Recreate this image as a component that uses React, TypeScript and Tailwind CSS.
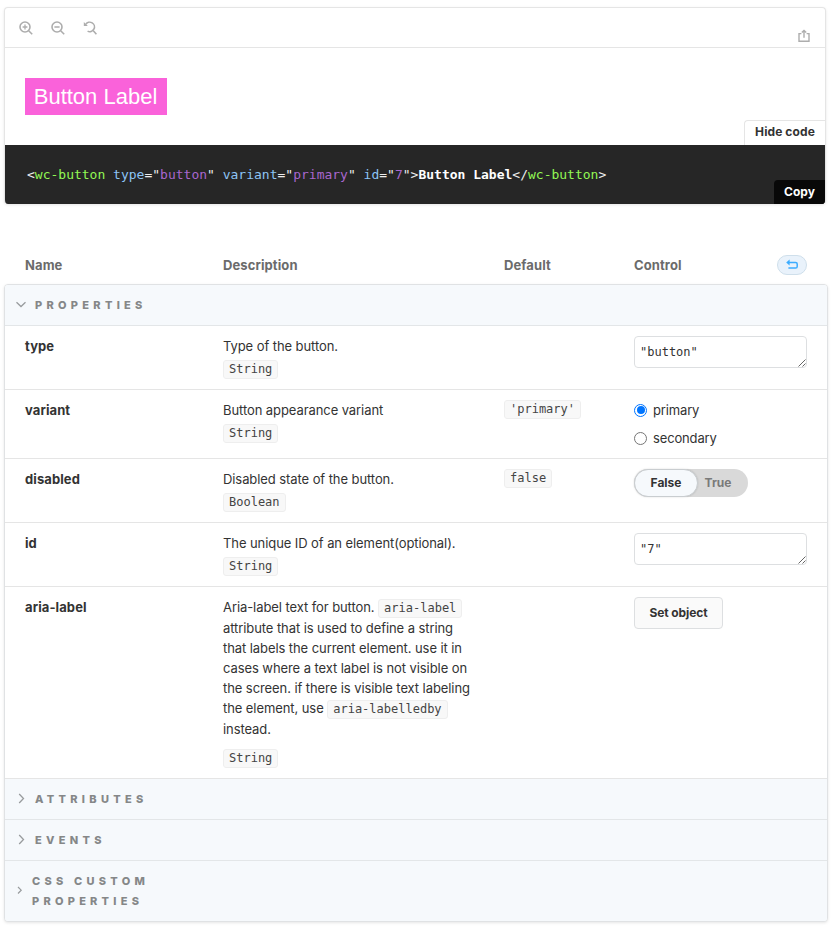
import type { ReactNode } from "react";

const SANS = "font-['Inter','Liberation_Sans',sans-serif]";
const MONO = "font-['DejaVu_Sans_Mono','Liberation_Mono',monospace]";
const COLS = "grid grid-cols-[198px_281px_130px_1fr]";

function Tag({ children }: { children: ReactNode }) {
  return (
    <code
      className={`${MONO} inline-block h-[19px] whitespace-nowrap rounded-[3px] border border-[#eeeeee] bg-[#f8f8f8] px-[5px] text-[12px] leading-[17px] tracking-normal text-[#444444]`}
    >
      {children}
    </code>
  );
}

function ToolIcon({ children }: { children: ReactNode }) {
  return (
    <svg width="14" height="14" viewBox="0 0 14 14" fill="none" stroke="#adadad" strokeWidth="1.6">
      {children}
    </svg>
  );
}

function Preview() {
  return (
    <div className="flex h-[197px] w-[822px] flex-col overflow-hidden rounded-[4px] border border-b-0 border-[#e5e5e5] bg-white shadow-[0_1px_3px_rgba(0,0,0,0.1)]">
      <div className="flex h-[40px] shrink-0 justify-between border-b border-[#e5e5e5] px-[14px]">
        <div className="flex gap-[18px] pt-[13px]">
          <ToolIcon>
            <circle cx="6" cy="6" r="5" />
            <path d="M9.7 9.7 13.2 13.2" />
            <path d="M6 3.6v4.8M3.6 6h4.8" strokeWidth="1.3" />
          </ToolIcon>
          <ToolIcon>
            <circle cx="6" cy="6" r="5" />
            <path d="M9.7 9.7 13.2 13.2" />
            <path d="M3.4 6h5.2" strokeWidth="1.3" />
          </ToolIcon>
          <ToolIcon>
            <path d="M2.8 3.4A4.7 4.7 0 1 1 4.6 10.1" />
            <path d="M10.1 9.5 13.4 13.2" />
            <path d="M.8 1v4h4z" fill="#adadad" stroke="none" />
          </ToolIcon>
        </div>
        <div className="pt-[21px]">
          <ToolIcon>
            <path d="M4.4 4.6H2v7.7h10V4.6H9.6M7 8.8V1.6M4.8 3.6 7 1.4l2.2 2.2" strokeWidth="1.4" />
          </ToolIcon>
        </div>
      </div>
      <div className="flex h-[97px] shrink-0 items-start justify-between pl-[20px]">
        <button className="mt-[30px] h-[37px] w-[142px] bg-[#fa62da] pr-px font-['Liberation_Sans',sans-serif] text-[22px] leading-[37px] text-white">
          Button Label
        </button>
        <button className="h-[25px] w-[81px] self-end rounded-tl-[4px] border-t border-l border-[#e5e5e5] bg-white pb-[2px] text-[12px] leading-[22px] font-bold tracking-[0.1px] text-[#333333]">
          Hide code
        </button>
      </div>
      <div className="flex h-[59px] shrink-0 items-end justify-between bg-[#262626] pl-[22px]">
        <pre className={`${MONO} mb-[19px] text-[13px] leading-[20px] text-[#eeeeee]`}>
          {"<"}
          <span className="text-[#92f854]">wc-button</span> <span className="text-[#8dc4f5]">type</span>="
          <span className="text-[#a967cf]">button</span>" <span className="text-[#8dc4f5]">variant</span>="
          <span className="text-[#a967cf]">primary</span>" <span className="text-[#8dc4f5]">id</span>="
          <span className="text-[#a967cf]">7</span>"{">"}
          <span className="font-bold text-white">Button Label</span>
          {"</"}
          <span className="text-[#92f854]">wc-button</span>
          {">"}
        </pre>
        <button className="h-[24px] w-[51px] rounded-tl-[4px] bg-[#080808] text-[12px] leading-[24px] font-bold text-white">
          Copy
        </button>
      </div>
    </div>
  );
}

function Section({ title, open }: { title: string; open?: boolean }) {
  return (
    <div className="flex h-[41px] items-center border-b border-[#e3e6e8] bg-[#f6f9fc] pl-[10px]">
      <svg width="12" height="12" viewBox="0 0 12 12" fill="none" stroke="#999c9e" strokeWidth="1.3">
        <path d={open ? "M1.5 3.2 6 7.5l4.5-4.3" : "M4.2 1 8.5 5.5l-4.3 4.5"} />
      </svg>
      <span className="ml-[8px] text-[11px] leading-[20px] font-extrabold tracking-[4.3px] text-[#858788] uppercase">
        {title}
      </span>
    </div>
  );
}

interface RowProps {
  name: string;
  type: string;
  height: string;
  value?: string;
  gap?: string;
  description: ReactNode;
  control: ReactNode;
}

function Row({ name, type, height, value, gap = "mt-[4px]", description, control }: RowProps) {
  return (
    <div className={`${COLS} ${height} border-b border-[#e5e5e5] pt-[10px] pl-[20px] text-[13px] leading-[20px] text-[#333333]`}>
      <div className="font-bold tracking-[0.1px]">{name}</div>
      <div className="flex flex-col items-start">
        <div className="w-[258px] tracking-[-0.08px]">{description}</div>
        <div className={`${gap} flex`}>
          <Tag>{type}</Tag>
        </div>
      </div>
      <div className="flex items-start">{value && <Tag>{value}</Tag>}</div>
      <div>{control}</div>
    </div>
  );
}

function Field({ text }: { text: string }) {
  return (
    <div className="flex h-[32px] w-[173px] items-end justify-between rounded-[4px] border border-[#dddfe1] bg-white pl-[5px]">
      <span className={`${MONO} mb-[5px] text-[12px] leading-[20px]`}>{text}</span>
      <svg width="9" height="9" viewBox="0 0 9 9" stroke="#555" strokeWidth="0.9">
        <path d="M1.5 8.5 8.5 1.5M5.5 8.5l3-3" />
      </svg>
    </div>
  );
}

function Radio({ label, checked }: { label: string; checked?: boolean }) {
  return (
    <div className="flex h-[20px] items-center">
      <span
        className={`flex size-[13px] items-center justify-center rounded-full border ${checked ? "border-[#0075ff]" : "border-[#767676]"}`}
      >
        {checked && <span className="size-[8px] rounded-full bg-[#0075ff]" />}
      </span>
      <span className="ml-[6px] tracking-[-0.15px]">{label}</span>
    </div>
  );
}

export default function App() {
  return (
    <div className={`${SANS} h-[926px] w-[834px] overflow-hidden bg-white pt-[7px] pl-[4px]`}>
      <Preview />
      <div className={`${COLS} mt-[51px] items-center pl-[21px] text-[13px] leading-[20px] font-bold tracking-[0.1px] text-[#6b6b6b]`}>
        <span>Name</span>
        <span>Description</span>
        <span>Default</span>
        <div className="flex items-center justify-between pr-[27px]">
          <span>Control</span>
          <span className="flex h-[20px] w-[30px] items-center justify-center rounded-full border border-[#cfdfeb] bg-[#e9f2fb]">
            <svg width="12" height="12" viewBox="0 0 12 12" fill="none" stroke="#3cacff" strokeWidth="1.5">
              <path d="M2 3.5h7.6a1.6 1.6 0 0 1 1.6 1.6v2.3A1.6 1.6 0 0 1 9.6 9H2.4" />
              <path d="M.2 3.5 3.6.6v5.8z" fill="#3cacff" stroke="none" />
            </svg>
          </span>
        </div>
      </div>
      <div className="mt-[9px] w-[824px] overflow-hidden rounded-[4px] border border-[#e0e2e4] bg-white shadow-[0_1px_3px_rgba(0,0,0,0.1)]">
        <Section title="Properties" open />
        <Row name="type" type="String" height="h-[64px]" description="Type of the button." control={<Field text={'"button"'} />} />
        <Row
          name="variant"
          type="String"
          height="h-[69px]"
          value="'primary'"
          description="Button appearance variant"
          control={
            <div className="flex flex-col gap-[8px]">
              <Radio label="primary" checked />
              <Radio label="secondary" />
            </div>
          }
        />
        <Row
          name="disabled"
          type="Boolean"
          height="h-[64px]"
          value="false"
          description="Disabled state of the button."
          control={
            <div className="flex h-[28px] w-[114px] rounded-full bg-[#d9d9d9] text-[12px] leading-[26px] font-bold">
              <span className="w-[64px] rounded-full border border-[#c9cdd0] bg-[#f6f9fc] text-center shadow-[0_0_2px_rgba(0,0,0,0.15)]">
                False
              </span>
              <span className="w-[40px] pt-px text-center text-[#7a7a7a]">True</span>
            </div>
          }
        />
        <Row
          name="id"
          type="String"
          height="h-[64px]"
          description="The unique ID of an element(optional)."
          control={<Field text={'"7"'} />}
        />
        <Row
          name="aria-label"
          type="String"
          height="h-[192px]"
          gap="mt-[10px]"
          description={
            <>
              Aria-label text for button. <Tag>aria-label</Tag>
              <br />
              attribute that is used to define a string
              <br />
              that labels the current element. use it in
              <br />
              cases where a text label is not visible on
              <br />
              the screen. if there is visible text labeling
              <br />
              the element, use <Tag>aria-labelledby</Tag>
              <br />
              instead.
            </>
          }
          control={
            <button className="h-[32px] w-[89px] rounded-[4px] border border-[#dddfe1] bg-[#fafafa] text-[12px] leading-[30px] font-bold tracking-[-0.1px]">
              Set object
            </button>
          }
        />
        <Section title="Attributes" />
        <Section title="Events" />
        <div className="flex h-[60px] items-center bg-[#f6f9fc] pl-[11px]">
          <svg width="8" height="12" viewBox="0 0 8 12" fill="none" stroke="#999c9e" strokeWidth="1.2">
            <path d="M2 2 5.2 5.2 2 8.5" />
          </svg>
          <span className="ml-[8px] text-[11px] leading-[20px] font-extrabold tracking-[4.25px] text-[#858788] uppercase">
            CSS custom
            <br />
            properties
          </span>
        </div>
      </div>
    </div>
  );
}
